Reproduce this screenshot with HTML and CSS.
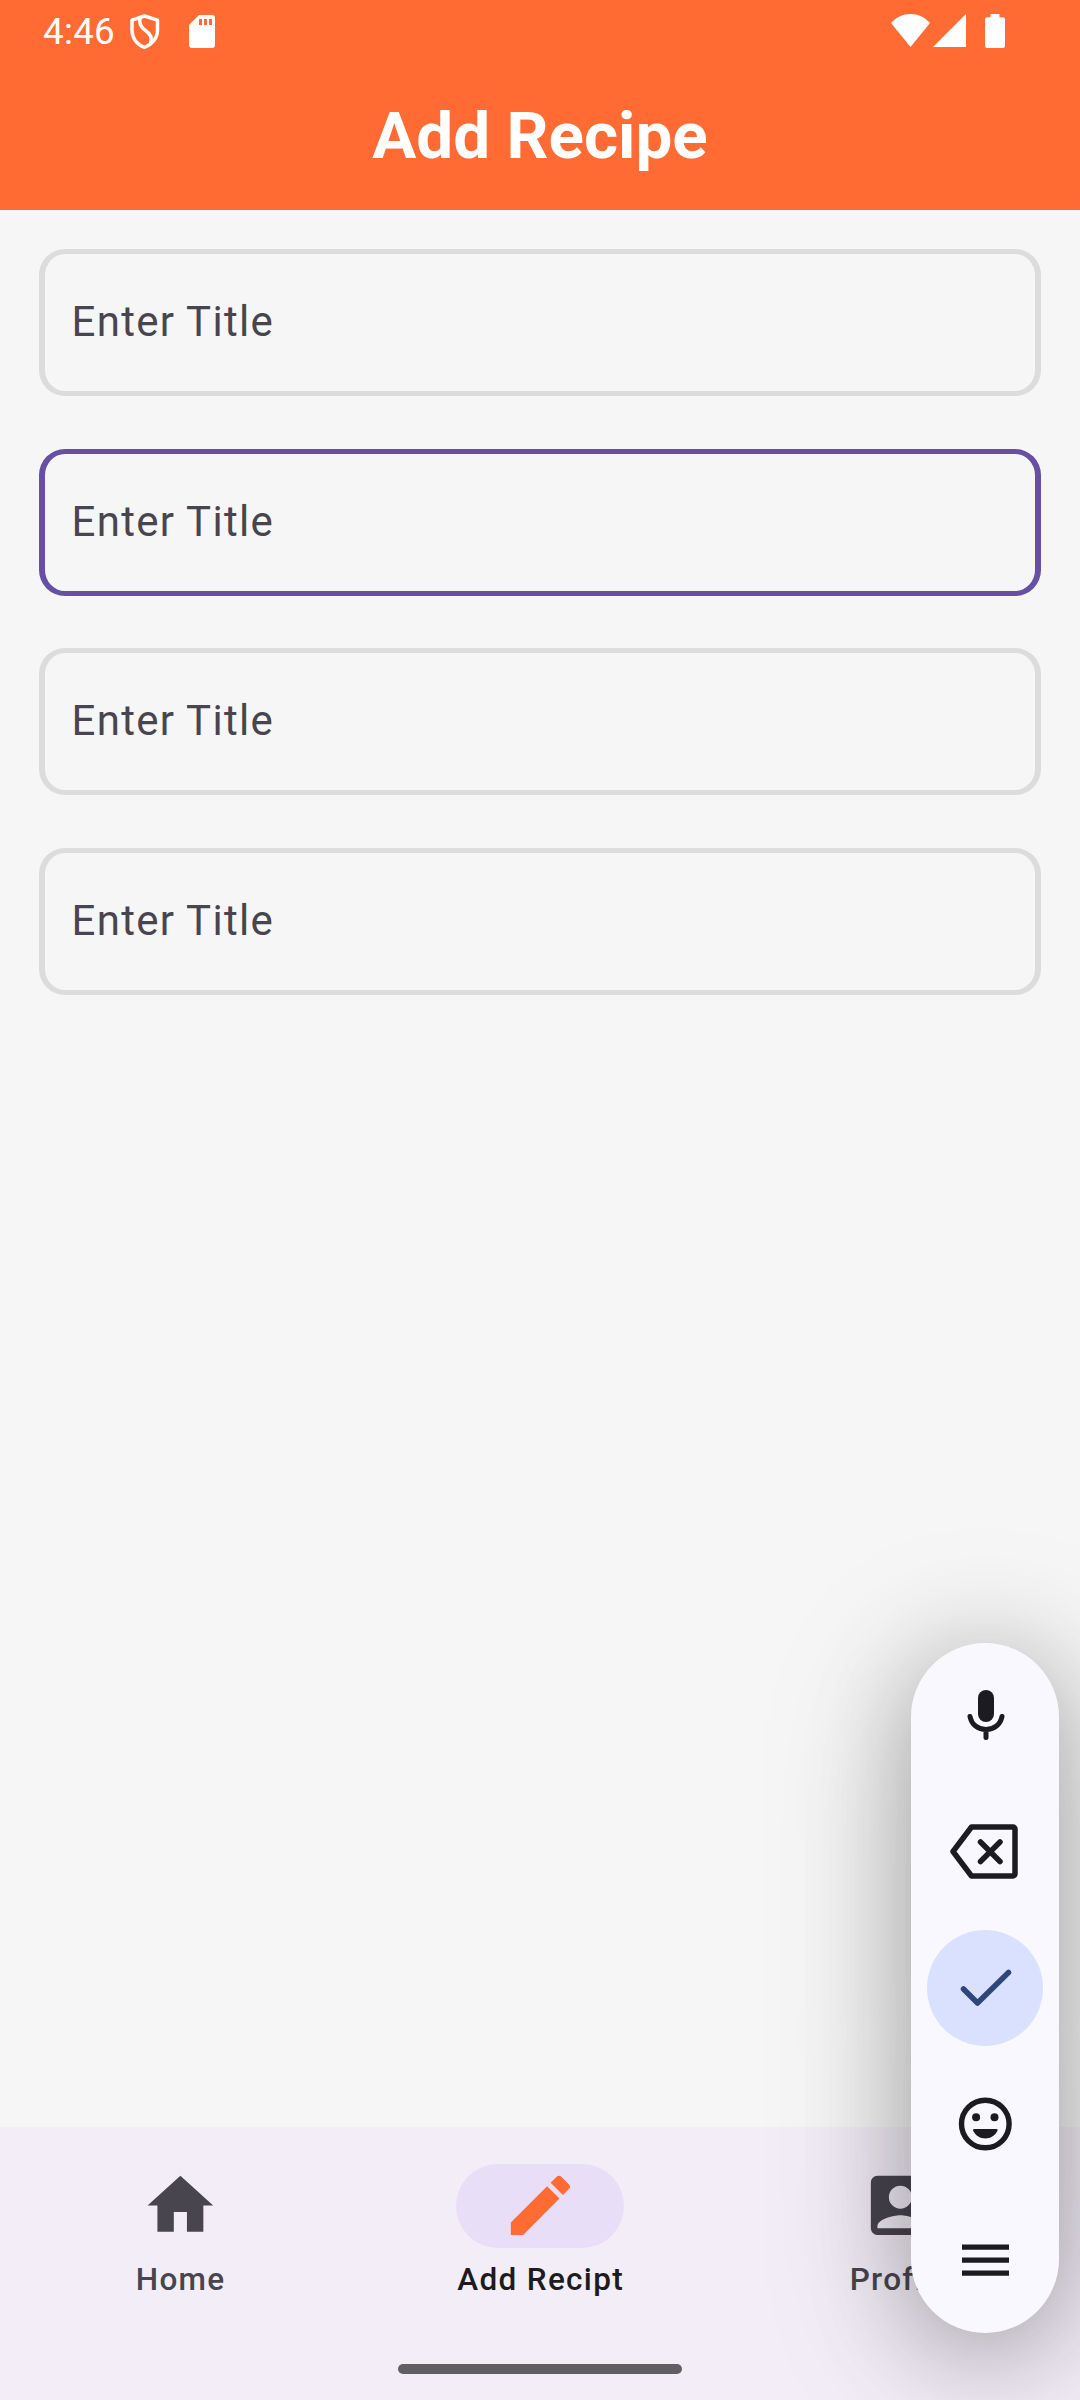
FILE: index.html
```html
<!DOCTYPE html>
<html lang="en">
<head>
<meta charset="utf-8">
<title>Add Recipe</title>
<link rel="stylesheet" href="styles.css">
</head>
<body>
<div class="screen">
  <header class="header">
    <div class="status">
      <div class="status-left">
        <span class="clock">4:46</span>
        <svg class="shield" width="30" height="36" viewBox="0 0 30 36" fill="none" stroke="#fff" stroke-width="3.500" stroke-linejoin="round">
          <path d="M14.500 2 2 6.200V16c0 8 5 14.500 12.500 17.500C22 30.500 27.500 24 27.500 16V6.200z"/>
          <path d="M10.200 3.500C8.500 9.500 11 13.500 15.500 16.500c4.500 3 7 7 5 12.500"/>
        </svg>
        <svg class="sd" width="26" height="33" viewBox="0 0 26 33">
          <path fill="#fff" d="M10 0h13a3 3 0 0 1 3 3v27a3 3 0 0 1-3 3H3a3 3 0 0 1-3-3V10z"/>
          <path fill="#ff6b33" d="M10 4h3v6h-3zM15 4h3v6h-3zM20 4h3v6h-3z"/>
        </svg>
      </div>
      <div class="status-right">
        <svg width="39" height="33" viewBox="0 0 39 33" fill="#fff"><path d="M0 9C5.500 3 12 0 19.500 0S33.500 3 39 9L19.500 33z"/></svg>
        <svg class="signal" width="33" height="33" viewBox="0 0 33 33" fill="#fff"><path d="M33 0v33H0z"/></svg>
        <svg class="battery" width="20" height="34" viewBox="0 0 20 34" fill="#fff"><path d="M5.500 0h9v3.300H18a2 2 0 0 1 2 2V32a2 2 0 0 1-2 2H2a2 2 0 0 1-2-2V5.300a2 2 0 0 1 2-2h3.500z"/></svg>
      </div>
    </div>
    <h1 class="title">Add Recipe</h1>
  </header>

  <main class="form">
    <div class="field">Enter Title</div>
    <div class="field focused">Enter Title</div>
    <div class="field">Enter Title</div>
    <div class="field">Enter Title</div>
  </main>

  <nav class="nav">
    <div class="tab">
      <span class="pill"><svg class="icon" viewBox="0 0 24 24"><path d="M10 20v-6h4v6h5v-8h3L12 3 2 12h3v8z"/></svg></span>
      <span class="label">Home</span>
    </div>
    <div class="tab active">
      <span class="pill"><svg class="icon" viewBox="0 0 24 24"><path d="M3 17.250V21h3.750L17.810 9.940l-3.750-3.750L3 17.250zM20.710 7.040a1 1 0 0 0 0-1.410l-2.340-2.340a1 1 0 0 0-1.410 0l-1.830 1.830 3.750 3.750 1.830-1.830z"/></svg></span>
      <span class="label">Add Recipt</span>
    </div>
    <div class="tab">
      <span class="pill"><svg class="icon" viewBox="0 0 24 24"><path d="M3 5v14a2 2 0 0 0 2 2h14a2 2 0 0 0 2-2V5a2 2 0 0 0-2-2H5a2 2 0 0 0-2 2zm12.500 4.500a3.500 3.500 0 1 1-7 0 3.500 3.500 0 0 1 7 0zM5 18.500c0-2.300 4.700-3.500 7-3.500s7 1.200 7 3.500v.5H5z"/></svg></span>
      <span class="label">Profile</span>
    </div>
    <div class="gesture"></div>
  </nav>

  <aside class="toolbar">
    <div class="tool">
      <svg class="mic" width="38" height="51" viewBox="0 0 38 51" fill="none" stroke="#1b1b20" stroke-width="5" stroke-linecap="round"><rect x="11" y="0" width="16" height="32" rx="8" fill="#1b1b20" stroke="none"/><path d="M3 26.500C4.500 34.500 11 39.500 19 39.500s14.500-5 16-13M19 40v7.500"/></svg>
    </div>
    <div class="tool">
      <svg class="backspace" width="68" height="55" viewBox="0 0 68 55" fill="none" stroke="#1b1b20" stroke-width="5.500" stroke-linejoin="round" stroke-linecap="round"><path d="M21.500 3H63a2 2 0 0 1 2 2v45a2 2 0 0 1-2 2H21.500L3 27.500zM30.500 18 50 37.500M50 18 30.500 37.500"/></svg>
    </div>
    <div class="tool confirm">
      <svg class="check" width="52" height="38" viewBox="0 0 52 38" fill="none" stroke="#304578" stroke-width="5.500" stroke-linecap="round" stroke-linejoin="round"><path d="M3.500 20 17.500 34 48.500 3.500"/></svg>
    </div>
    <div class="tool">
      <svg width="54" height="54" viewBox="0 0 54 54" fill="#1b1b20"><circle cx="27.300" cy="27" r="23.800" fill="none" stroke="#1b1b20" stroke-width="5.400"/><circle cx="18.100" cy="20.200" r="4"/><circle cx="36.500" cy="20.200" r="4"/><path d="M16.300 32h22q2 0 1.200 1.800C36.800 39 32.300 41.500 27.300 41.500S17.800 39 15.100 33.800Q14.300 32 16.300 32z"/></svg>
    </div>
    <div class="tool">
      <svg class="menu" width="47" height="32" viewBox="0 0 47 32" fill="#1b1b20"><path d="M0 .5h47v5.300H0zM0 13.500h47v5.300H0zM0 26.500h47v5.300H0z"/></svg>
    </div>
  </aside>
</div>
</body>
</html>
```
FILE: styles.css
```css
* { box-sizing: border-box; }

body {
  margin: 0;
  font-family: Roboto, "Liberation Sans", sans-serif;
  background: #f6f6f6;
}

svg { display: block; flex: none; }

.screen {
  position: relative;
  display: flex;
  flex-direction: column;
  width: 1080px;
  height: 2400px;
  overflow: hidden;
}

.header {
  height: 210px;
  background: #ff6b33;
  color: #fff;
}

.status {
  display: flex;
  justify-content: space-between;
  align-items: flex-start;
  height: 63px;
  padding: 14px 75px 0 43px;
}

.status-left,
.status-right {
  display: flex;
  align-items: flex-start;
}

.clock {
  width: 87px;
  font-size: 36.750px;
  line-height: 36px;
  letter-spacing: .3px;
}

.sd { margin: 1px 0 0 29px; }
.signal { margin-left: 3.500px; }
.battery { margin-left: 19px; }

.title {
  margin: 0;
  padding-top: 35px;
  font-size: 65.600px;
  line-height: 76px;
  font-weight: 700;
  text-align: center;
}

.form {
  flex: 1;
  display: flex;
  flex-direction: column;
  gap: 52.500px;
  padding: 39px 39px 0;
}

.field {
  height: 147px;
  padding: 40px 26.500px;
  border: 5px solid #dcdcdc;
  border-left-width: 6px;
  border-right-width: 6px;
  border-radius: 26px;
  color: #49454f;
  font-size: 42px;
  line-height: 56px;
  letter-spacing: 1.280px;
}

.field.focused { border-color: #6750a4; }

.nav {
  display: grid;
  grid-template-columns: repeat(3, 1fr);
  grid-template-rows: 1fr auto;
  height: 273px;
  padding: 37px 0 26px;
  background: #f3edf7;
  color: #49454f;
}

.tab {
  display: flex;
  flex-direction: column;
  align-items: center;
}

.pill {
  display: grid;
  place-items: center;
  width: 168px;
  height: 84px;
  padding-bottom: 1px;
  border-radius: 42px;
}

.icon {
  width: 78.750px;
  height: 78.750px;
  fill: currentColor;
}

.label {
  margin-top: 11px;
  padding-left: 1.300px;
  font-size: 31.500px;
  line-height: 42px;
  font-weight: 500;
  letter-spacing: 1.310px;
}

.active .pill {
  background: #e8def8;
  color: #ff6b33;
}

.active .label { color: #1d1b20; }

.gesture {
  grid-column: 1 / -1;
  justify-self: center;
  width: 284px;
  height: 10px;
  border-radius: 5px;
  background: #615e64;
}

/* floating keyboard toolbar */
.toolbar {
  position: absolute;
  top: 1643px;
  right: 21px;
  display: flex;
  flex-direction: column;
  align-items: center;
  gap: 20px;
  width: 148px;
  height: 690px;
  padding-top: 15px;
  border-radius: 74px;
  background: #f9f8ff;
  box-shadow: 0 18px 100px rgba(0, 0, 0, .26), 0 18px 160px rgba(0, 0, 0, .18);
}

.tool {
  display: grid;
  place-items: center;
  flex: none;
  width: 116px;
  height: 116px;
  border-radius: 50%;
}

.confirm { background: #dae1ff; }
.mic { margin: 0 0 1px 1px; }
.backspace { margin: 0 3px 1px 0; }
.check { margin-left: 1px; }
.menu { margin-left: 1px; }
```
